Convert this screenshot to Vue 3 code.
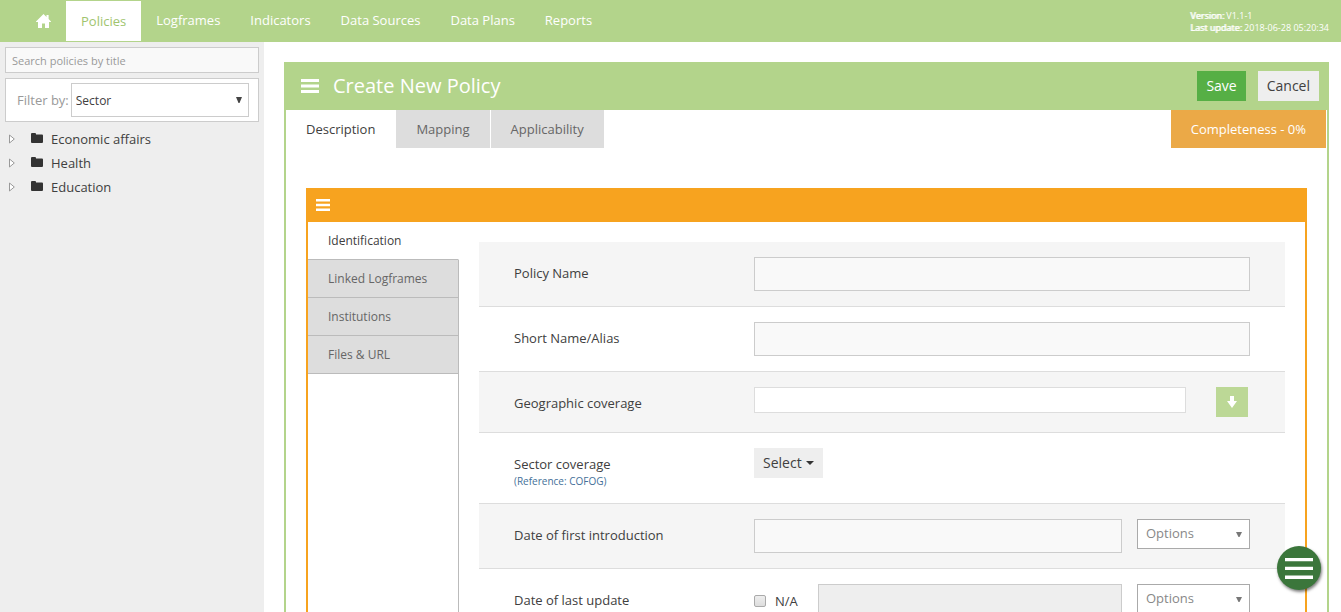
<script setup>
import { ref } from 'vue'

const links = ['Logframes', 'Indicators', 'Data Sources', 'Data Plans', 'Reports']
const sectors = ['Economic affairs', 'Health', 'Education']
const sideTabs = ['Identification', 'Linked Logframes', 'Institutions', 'Files & URL']
const notApplicable = ref(false)
</script>

<template>
  <div class="app">
    <header class="topbar">
      <nav class="nav">
        <a href="#" class="home" aria-label="Home">
          <svg width="15" height="14" viewBox="0 0 15 14">
            <path fill="#fff" d="M7.5 0 L10.5 2.9 V1 H12.6 V4.9 L15 7.4 V8 H13 V14 H9 V9.5 H6 V14 H2 V8 H0 V7.4 Z" />
          </svg>
        </a>
        <a href="#" class="active">Policies</a>
        <a v-for="link in links" :key="link" href="#">{{ link }}</a>
      </nav>
      <div class="version">
        <div><b>Version:</b> V1.1-1</div>
        <div><b>Last update:</b> 2018-06-28 05:20:34</div>
      </div>
    </header>

    <div class="body">
      <aside class="sidebar">
        <input class="search" type="text" placeholder="Search policies by title" aria-label="Search policies by title" />
        <div class="filter">
          <label for="filter">Filter by:</label>
          <div class="select-wrap">
            <select id="filter"><option>Sector</option></select>
            <svg class="arrow" width="6" height="6" viewBox="0 0 6 6"><path fill="#444" d="M0 0H6L3.5 6H2.5Z" /></svg>
          </div>
        </div>
        <ul class="tree">
          <li v-for="s in sectors" :key="s">
            <svg class="twist" width="6" height="10" viewBox="0 0 6 10"><path fill="#fff" stroke="#999" d="M.5 1V9L5.3 5Z" /></svg>
            <svg class="folder" width="12" height="10" viewBox="0 0 12 10"><path fill="#333" d="M0 1Q0 0 1 0H4Q5 0 5 1V1.5H11Q12 1.5 12 2.5V9Q12 10 11 10H1Q0 10 0 9Z" /></svg>
            <a href="#">{{ s }}</a>
          </li>
        </ul>
      </aside>

      <main class="main">
        <section class="panel">
          <div class="panel-head">
            <svg width="18" height="14" viewBox="0 0 18 14"><path fill="#fff" d="M0 0H18V3H0ZM0 5.5H18V8.5H0ZM0 11H18V14H0Z" /></svg>
            <h1>Create New Policy</h1>
            <button type="button" class="btn save">Save</button>
            <button type="button" class="btn">Cancel</button>
          </div>
          <div class="tabs">
            <button type="button" class="tab current">Description</button>
            <button type="button" class="tab">Mapping</button>
            <button type="button" class="tab">Applicability</button>
            <span class="complete">Completeness - 0%</span>
          </div>

          <div class="card">
            <div class="card-head">
              <svg width="14" height="12" viewBox="0 0 14 12"><path fill="#fff" d="M0 0H14V2.4H0ZM0 4.8H14V7.2H0ZM0 9.6H14V12H0Z" /></svg>
            </div>
            <div class="card-body">
              <div class="side-tabs">
                <button v-for="(t, i) in sideTabs" :key="t" type="button" :class="{ current: i === 0 }">{{ t }}</button>
                <div class="rest"></div>
              </div>
              <form class="form" @submit.prevent>
                <div class="row">
                  <label class="label" for="name">Policy Name</label>
                  <div class="controls"><input id="name" class="field" type="text" /></div>
                </div>
                <div class="row">
                  <label class="label" for="alias">Short Name/Alias</label>
                  <div class="controls"><input id="alias" class="field" type="text" /></div>
                </div>
                <div class="row">
                  <label class="label" for="geo">Geographic coverage</label>
                  <div class="controls geo">
                    <input id="geo" class="field small" type="text" />
                    <button type="button" class="pick" aria-label="Pick area">
                      <svg width="10" height="12" viewBox="0 0 10 12"><path fill="#fff" d="M3 0H7V5H10L5 12L0 5H3Z" /></svg>
                    </button>
                  </div>
                </div>
                <div class="row">
                  <div class="label">
                    <label for="sector">Sector coverage</label>
                    <a href="#" class="ref">(Reference: COFOG)</a>
                  </div>
                  <div class="controls">
                    <button id="sector" type="button" class="btn drop">
                      Select
                      <svg width="8" height="4" viewBox="0 0 8 4"><path fill="#333" d="M0 0H8L4 4Z" /></svg>
                    </button>
                  </div>
                </div>
                <div class="row">
                  <label class="label" for="first">Date of first introduction</label>
                  <div class="controls">
                    <input id="first" class="field" type="text" />
                    <div class="select-wrap options">
                      <select aria-label="Introduction date options"><option>Options</option></select>
                      <svg class="arrow" width="6" height="5" viewBox="0 0 6 5"><path fill="#777" d="M0 0H6L3.5 5H2.5Z" /></svg>
                    </div>
                  </div>
                </div>
                <div class="row">
                  <label class="label" for="last">Date of last update</label>
                  <div class="controls">
                    <label class="na"><input v-model="notApplicable" type="checkbox" />N/A</label>
                    <input id="last" class="field muted" type="text" />
                    <div class="select-wrap options">
                      <select aria-label="Update date options"><option>Options</option></select>
                      <svg class="arrow" width="6" height="5" viewBox="0 0 6 5"><path fill="#777" d="M0 0H6L3.5 5H2.5Z" /></svg>
                    </div>
                  </div>
                </div>
              </form>
            </div>
          </div>
        </section>
      </main>
    </div>

    <button type="button" class="fab" aria-label="Menu">
      <svg width="28" height="21" viewBox="0 0 28 21"><path fill="#fff" d="M0 0H28V3.3H0ZM0 8.8H28V12.1H0ZM0 17.6H28V21H0Z" /></svg>
    </button>
  </div>
</template>

<style>
body {
  margin: 0;
}
</style>

<style scoped>
.app,
.app * {
  box-sizing: border-box;
}
.app {
  display: flex;
  flex-direction: column;
  height: 100vh;
  overflow: hidden;
  background: #fff;
  color: #404040;
  font: 13px/18px "Open Sans", "Noto Sans", sans-serif;
}
button,
input,
select {
  margin: 0;
  border: 0;
  border-radius: 0;
  font: inherit;
  color: inherit;
}
a {
  color: inherit;
  text-decoration: none;
}
svg {
  display: block;
  flex: none;
}
.topbar {
  display: flex;
  justify-content: space-between;
  height: 42px;
  flex: none;
  padding: 0 12px 0 21px;
  background: #b3d48b;
  color: #fff;
}
.nav {
  display: flex;
}
.nav a {
  display: flex;
  align-items: center;
  padding: 0 15px 2px;
}
.nav a.home {
  padding-bottom: 0;
}
.nav a.active {
  margin: 1px 0;
  padding-bottom: 0;
  background: #fff;
  color: #a0c46e;
}
.version {
  padding-top: 10px;
  font-size: 9px;
  line-height: 12px;
}
.version b {
  font-weight: 400;
  text-shadow: 1px 0 0 #fff;
}
.body {
  display: flex;
  flex: 1;
  min-height: 0;
}
.sidebar {
  width: 264px;
  flex: none;
  padding: 5px;
  background: #eee;
}
.search {
  display: block;
  width: 254px;
  height: 26px;
  padding: 0 6px;
  border: 1px solid #ccc;
  background: #f9f9f9;
  font-size: 11px;
}
.search::placeholder {
  color: #999;
}
.filter {
  display: flex;
  align-items: center;
  gap: 2px;
  width: 254px;
  margin-top: 5px;
  padding: 4px 9px 4px 11px;
  border: 1px solid #ccc;
  background: #fff;
  color: #999;
}
.select-wrap {
  position: relative;
  flex: 1;
}
.select-wrap select {
  display: block;
  appearance: none;
  width: 100%;
  height: 34px;
  padding: 2px 4px 0;
  border: 1px solid #ccc;
  background: #fff;
  color: #404040;
  font-size: 12px;
}
.arrow {
  position: absolute;
  top: 50%;
  right: 7px;
  margin-top: -3px;
  pointer-events: none;
}
.tree {
  margin: 5px 0 0;
  padding: 0;
  list-style: none;
}
.tree li {
  display: flex;
  align-items: center;
  height: 24px;
  padding-left: 4px;
}
.folder {
  margin: 0 8px 2px 16px;
}
.main {
  flex: 1;
  min-width: 0;
  padding: 20px 12px 0 20px;
}
.panel {
  border: 2px solid #b3d48b;
  border-top: 0;
}
.panel-head {
  display: flex;
  align-items: center;
  height: 48px;
  padding: 0 8px 0 15px;
  background: #b3d48b;
}
h1 {
  flex: 1;
  margin: 0 0 0 14px;
  color: #fff;
  font-size: 20px;
  font-weight: 400;
  line-height: 28px;
}
.btn {
  height: 30px;
  padding: 0 9px;
  background: #eee;
  color: #404040;
  font-size: 14px;
}
.btn.save {
  margin-right: 12px;
  background: #56af45;
  color: #fff;
}
.tabs {
  display: flex;
  gap: 1px;
}
.tab {
  height: 38px;
  padding: 0 20px;
  background: #ddd;
  color: #666;
}
.tab.current {
  background: #fff;
  color: #404040;
}
.complete {
  margin: 0 1px 0 auto;
  padding: 10px 20px;
  background: #eba947;
  color: #fff;
}
.card {
  margin: 40px 20px 20px;
  border: 2px solid #f7a31f;
  border-top: 0;
}
.card-head {
  display: flex;
  align-items: center;
  height: 34px;
  padding-left: 8px;
  background: #f7a31f;
}
.card-body {
  display: flex;
}
.side-tabs {
  display: flex;
  flex-direction: column;
  width: 151px;
  flex: none;
}
.side-tabs button {
  height: 38px;
  flex: none;
  padding: 0 20px;
  border-right: 1px solid #bbb;
  border-bottom: 1px solid #bbb;
  background: #ddd;
  color: #666;
  font-size: 12px;
  text-align: left;
}
.side-tabs .current {
  border-right-color: #fff;
  background: #fff;
  color: #404040;
}
.rest {
  flex: 1;
  border-right: 1px solid #bbb;
}
.form {
  flex: 1;
  min-width: 0;
  padding: 20px;
}
.row {
  display: flex;
  padding: 15px 35px;
  border-bottom: 1px solid #ddd;
}
.row:nth-child(odd) {
  background: #f5f5f5;
}
.label {
  width: 240px;
  flex: none;
  padding-top: 7px;
}
.ref {
  display: block;
  padding-top: 2px;
  color: #447099;
  font-size: 10px;
  line-height: 13px;
}
.controls {
  display: flex;
  flex: 1;
  align-items: flex-start;
  gap: 15px;
  min-width: 0;
}
.field {
  flex: 1;
  min-width: 0;
  height: 34px;
  padding: 0 8px;
  border: 1px solid #ccc;
  background: #f9f9f9;
}
.geo {
  gap: 30px;
  padding-right: 2px;
}
.small {
  height: 26px;
  border-color: #ddd;
  background: #fff;
}
.muted {
  background: #eee;
}
.pick {
  display: flex;
  align-items: center;
  justify-content: center;
  width: 32px;
  height: 30px;
  padding: 0;
  background: #bcd896;
}
.drop {
  display: flex;
  align-items: center;
  gap: 4px;
}
.options {
  width: 113px;
  flex: none;
}
.options select {
  height: 30px;
  padding: 0 8px 2px;
  border-color: #aaa;
  color: #888;
  font-size: 13px;
}
.options .arrow {
  right: 8px;
  margin-top: -2px;
}
.na {
  display: flex;
  align-items: center;
  gap: 9px;
  width: 49px;
  height: 34px;
}
.na input {
  appearance: none;
  width: 12px;
  height: 12px;
  border: 1px solid #aaa;
  border-radius: 2px;
  background: linear-gradient(#eee, #ddd);
}
.na input:checked {
  background: #666;
}
.fab {
  position: fixed;
  right: 20px;
  bottom: 22px;
  display: flex;
  align-items: center;
  justify-content: center;
  width: 44px;
  height: 44px;
  padding: 0;
  border-radius: 50%;
  background: #3b763b;
  box-shadow: 1px 2px 3px rgba(0, 0, 0, 0.5);
}
</style>
